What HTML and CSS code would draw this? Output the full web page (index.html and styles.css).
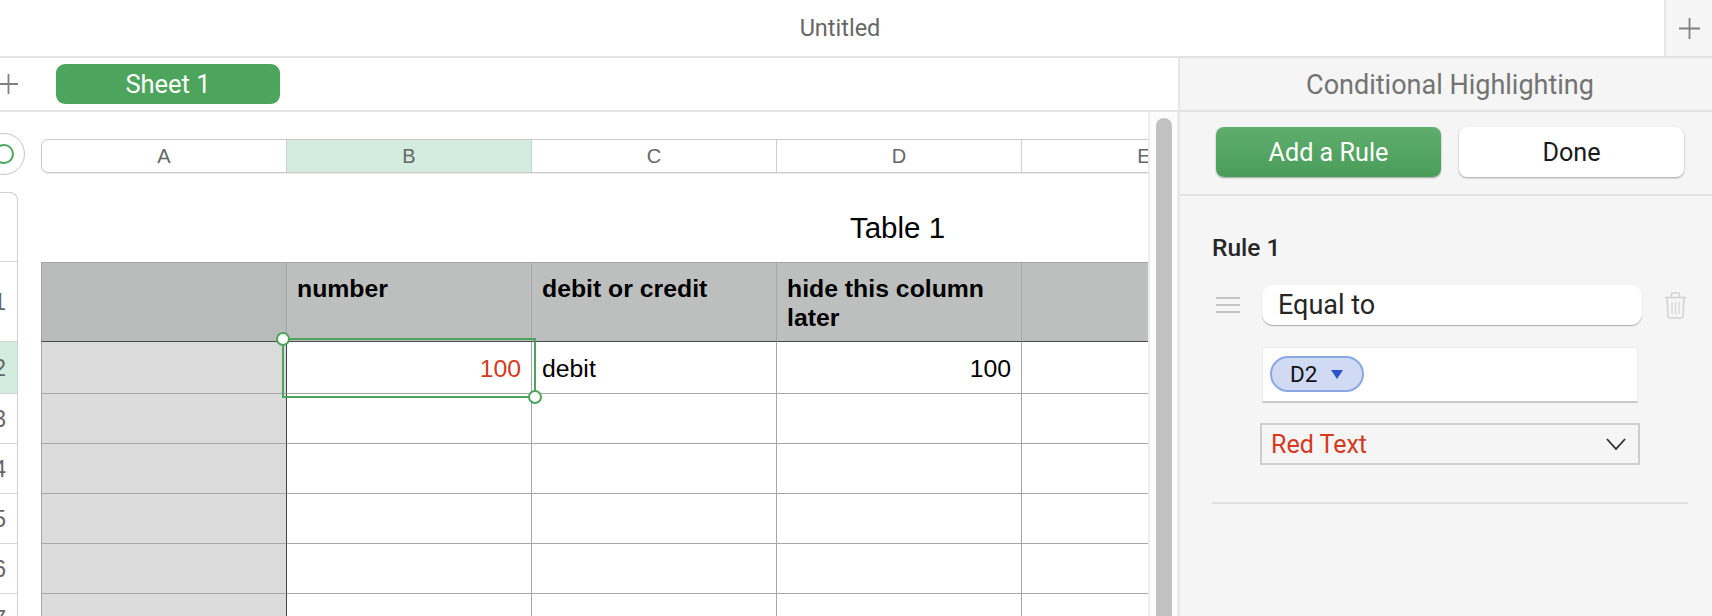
FILE: index.html
```html
<!DOCTYPE html>
<html>
<head>
  <meta charset="utf-8" />
  <title>Untitled</title>
  <link rel="stylesheet" href="styles.css">
</head>
<body>

<div class="titlebar">
  <div class="doc-title">Untitled</div>
  <div class="new-btn">
    <svg width="21" height="21" viewBox="0 0 21 21"><path d="M10.5 0V21M0 10.5H21" stroke="#808080" stroke-width="1.8" fill="none"/></svg>
  </div>
</div>

<div class="main">
  <div class="left">
    <div class="tabbar">
      <svg class="add-sheet" width="19" height="20" viewBox="0 0 19 20"><path d="M9.5 0V20M0 10H19" stroke="#808080" stroke-width="1.8" fill="none"/></svg>
      <div class="tab">Sheet 1</div>
    </div>

    <div class="pane">
      <div class="sheet">
        <div class="gutter">
          <div class="corner"><span class="corner-ring"></span></div>
          <div class="rows">
            <div class="row-h row-blank"></div>
            <div class="row-h row-first"><span>1</span></div>
            <div class="row-h row-on"><span>2</span></div>
            <div class="row-h"><span>3</span></div>
            <div class="row-h"><span>4</span></div>
            <div class="row-h"><span>5</span></div>
            <div class="row-h"><span>6</span></div>
            <div class="row-h"><span>7</span></div>
          </div>
        </div>

        <div class="grid">
          <div class="cols">
            <div class="col">A</div>
            <div class="col col-on">B</div>
            <div class="col">C</div>
            <div class="col">D</div>
            <div class="col">E</div>
          </div>
          <div class="table-name">Table 1</div>
          <div class="table-wrap">
            <table class="data">
              <tr class="head">
                <td></td>
                <td>number</td>
                <td>debit or credit</td>
                <td>hide this column later</td>
                <td></td><td></td><td></td>
              </tr>
              <tr class="first">
                <td></td>
                <td class="num red">100</td>
                <td>debit</td>
                <td class="num">100</td>
                <td></td><td></td><td></td>
              </tr>
              <tr><td></td><td></td><td></td><td></td><td></td><td></td><td></td></tr>
              <tr><td></td><td></td><td></td><td></td><td></td><td></td><td></td></tr>
              <tr><td></td><td></td><td></td><td></td><td></td><td></td><td></td></tr>
              <tr><td></td><td></td><td></td><td></td><td></td><td></td><td></td></tr>
              <tr><td></td><td></td><td></td><td></td><td></td><td></td><td></td></tr>
            </table>
            <div class="selection">
              <span class="knob knob-a"></span>
              <span class="knob knob-b"></span>
            </div>
          </div>
        </div>
      </div>

      <div class="scroll"><div class="thumb"></div></div>
    </div>
  </div>

  <div class="panel">
    <div class="panel-head">Conditional Highlighting</div>

    <div class="panel-btns">
      <div class="btn btn-add">Add a Rule</div>
      <div class="btn btn-done">Done</div>
    </div>

    <div class="rule">
      <div class="rule-name">Rule 1</div>

      <div class="rule-row">
        <div class="handle"><i></i><i></i><i></i></div>
        <div class="rule-type">Equal to</div>
        <svg class="trash" width="23" height="27" viewBox="0 0 23 27" fill="none" stroke="#d2d2d2" stroke-width="1.6">
          <path d="M1 5.5H22"/>
          <path d="M7.5 5V2.5Q7.5 1 9 1H14Q15.5 1 15.5 2.5V5"/>
          <path d="M3 6L4 24Q4.2 26 6 26H17Q18.8 26 19 24L20 6"/>
          <path d="M8 10V22M11.5 10V22M15 10V22" stroke-width="1.2"/>
        </svg>
      </div>

      <div class="rule-value">
        <div class="token">D2<span class="token-arrow"></span></div>
      </div>

      <div class="rule-style">
        <span>Red Text</span>
        <svg width="20" height="12" viewBox="0 0 20 12"><path d="M1 1L10 11L19 1" stroke="#2b2b2b" stroke-width="1.8" fill="none"/></svg>
      </div>

      <div class="rule-line"></div>
    </div>
  </div>
</div>

</body>
</html>
```

FILE: styles.css
```css
* {
  margin: 0;
  padding: 0;
  box-sizing: border-box;
}

html, body {
  width: 1712px;
  height: 616px;
  overflow: hidden;
  background: #fff;
}

body {
  font-family: Roboto, "Noto Sans", sans-serif;
}

.titlebar {
  display: flex;
  height: 58px;
  border-bottom: 2px solid #e3e3e3;
}

.doc-title {
  flex: 1;
  padding-left: 16px;
  text-align: center;
  line-height: 56px;
  font-size: 23.5px;
  color: #666;
}

.new-btn {
  display: flex;
  align-items: center;
  justify-content: center;
  width: 48px;
  background: #f5f5f5;
  border-left: 2px solid #e6e6e6;
}

.main {
  display: flex;
  height: 558px;
}

.left {
  width: 1178px;
  overflow: hidden;
}

.tabbar {
  display: flex;
  align-items: center;
  height: 54px;
  border-bottom: 2px solid #e3e3e3;
  padding-bottom: 1px;
}

.add-sheet {
  margin-left: -1px;
  margin-right: 38px;
}

.tab {
  width: 224px;
  height: 40px;
  line-height: 40px;
  border-radius: 9px;
  background: #4da45c;
  color: #fff;
  text-align: center;
  font-size: 25.5px;
}

.pane {
  display: flex;
  height: 504px;
}

.sheet {
  display: flex;
  width: 1148px;
  overflow: hidden;
}

.gutter {
  flex: none;
  width: 41px;
  padding-top: 21px;
}

.corner {
  display: flex;
  align-items: center;
  justify-content: center;
  width: 42px;
  height: 42px;
  margin-left: -17px;
  border: 1.5px solid #c6c6c6;
  border-radius: 50%;
  background: #fff;
}

.corner-ring {
  width: 20px;
  height: 20px;
  border: 2px solid #4da45c;
  border-radius: 50%;
}

.rows {
  width: 38px;
  margin-top: 17px;
  margin-left: -20px;
  border: 1.5px solid #d0d0d0;
  border-left: 0;
  border-bottom: 0;
  border-top-right-radius: 8px;
}

.row-h {
  display: flex;
  align-items: center;
  justify-content: flex-end;
  height: 50px;
  padding: 2px 11px 0 0;
  border-bottom: 1px solid #d6d6d6;
  font-family: "Liberation Sans", Arial, sans-serif;
  font-size: 23px;
  color: #666;
}

.row-blank {
  height: 69px;
}

.row-first {
  height: 80px;
}

.row-on {
  height: 52px;
  background: #d4ecdf;
}

.grid {
  flex: none;
  padding-top: 27px;
}

.cols {
  display: flex;
  width: 1228px;
  height: 34px;
  border: 1.5px solid #c8c8c8;
  border-radius: 7px 0 0 7px;
  box-shadow: 0 1px 1px #eee;
}

.col {
  width: 245px;
  padding-top: 1px;
  line-height: 31px;
  text-align: center;
  border-right: 1px solid #cfcfcf;
  font-family: "Liberation Sans", Arial, sans-serif;
  font-size: 20px;
  color: #666;
}

.col-on {
  background: #d4ecdf;
}

.table-name {
  width: 1713px;
  height: 89px;
  padding-top: 37px;
  text-align: center;
  font-family: "Liberation Sans", Arial, sans-serif;
  font-size: 29.5px;
  line-height: 36px;
  color: #000;
}

.table-wrap {
  position: relative;
  width: 1716px;
}

.data {
  width: 1716px;
  table-layout: fixed;
  border-collapse: separate;
  border-spacing: 0;
  font-family: "Liberation Sans", Arial, sans-serif;
  font-size: 24.8px;
  color: #000;
}

.data td {
  height: 50px;
  padding: 0 10px 0 10px;
  border-right: 1px solid #a6a6a6;
  border-bottom: 1px solid #a6a6a6;
  background: #fff;
  vertical-align: middle;
}

.data td:first-child {
  width: 246px;
  background: #dbdbdb;
  border-left: 1px solid #a6a6a6;
  border-right-color: #444;
}

.data .head td {
  height: 80px;
  padding-top: 11px;
  vertical-align: top;
  background: #bdbfbe;
  border-top: 1px solid #a6a6a6;
  border-bottom-color: #4a4a4a;
  font-weight: bold;
  line-height: 29px;
}

.data .head td:first-child {
  background: #b9bbba;
  border-right-color: #a6a6a6;
}

.data .first td {
  height: 52px;
  padding-top: 2px;
}

.num {
  text-align: right;
}

.red {
  color: #d33a1f;
}

.selection {
  position: absolute;
  left: 241px;
  top: 76px;
  width: 254px;
  height: 60px;
  border: 2px solid #4da45c;
}

.knob {
  position: absolute;
  width: 14px;
  height: 14px;
  border: 2px solid #4da45c;
  border-radius: 50%;
  background: #fff;
}

.knob-a {
  left: -8px;
  top: -8px;
}

.knob-b {
  right: -8px;
  bottom: -8px;
}

.scroll {
  width: 30px;
  padding-top: 6px;
  padding-left: 6px;
  border-left: 2px solid #ececec;
  border-right: 1px solid #ececec;
  background: #fcfcfc;
}

.thumb {
  width: 16px;
  height: 520px;
  background: #c2c2c2;
  border-radius: 8px 8px 0 0;
}

.panel {
  flex: none;
  width: 534px;
  border-left: 2px solid #e6e6e6;
  background: #f5f5f5;
}

.panel-head {
  height: 54px;
  padding-left: 8px;
  border-bottom: 2px solid #e3e3e3;
  text-align: center;
  line-height: 55px;
  font-size: 27px;
  color: #737373;
}

.panel-btns {
  display: flex;
  gap: 18px;
  height: 84px;
  padding: 15px 0 0 36px;
  border-bottom: 2px solid #e3e3e3;
}

.btn {
  width: 225px;
  height: 50px;
  line-height: 52px;
  border-radius: 8px;
  text-align: center;
  font-size: 25.2px;
  box-shadow: 0 1px 2px rgba(0, 0, 0, 0.35);
}

.btn-add {
  background: linear-gradient(#5fad6e, #4a9d59);
  color: #fff;
}

.btn-done {
  background: #fff;
  color: #1a1a1a;
}

.rule {
  padding: 40px 24px 0 32px;
}

.rule-name {
  line-height: 24px;
  font-size: 24.5px;
  font-weight: 500;
  color: #262626;
}

.rule-row {
  display: flex;
  align-items: center;
  margin-top: 25px;
}

.handle {
  display: flex;
  flex-direction: column;
  gap: 5px;
  width: 24px;
  margin-left: 4px;
}

.handle i {
  height: 2px;
  background: #c4c4c4;
}

.rule-type {
  width: 380px;
  height: 40px;
  margin-left: 22px;
  padding-left: 16px;
  line-height: 41px;
  border-radius: 11px;
  background: #fff;
  box-shadow: 0 1px 1px rgba(0, 0, 0, 0.3);
  font-size: 27px;
  color: #262626;
}

.trash {
  margin-left: 22px;
}

.rule-value {
  display: flex;
  align-items: flex-start;
  width: 376px;
  height: 56px;
  margin: 22px 0 0 50px;
  padding: 8px 0 0 7px;
  background: #fff;
  border: 1px solid #ebebeb;
  border-bottom: 2px solid #c8c8c8;
}

.token {
  display: flex;
  align-items: center;
  width: 94px;
  height: 36px;
  padding-left: 18px;
  border: 2px solid #8aa7e4;
  border-radius: 18px;
  background: #d0dbf3;
  font-size: 22.5px;
  color: #111;
}

.token-arrow {
  width: 0;
  height: 0;
  margin-left: 14px;
  border-left: 6.5px solid transparent;
  border-right: 6.5px solid transparent;
  border-top: 9px solid #2a55c8;
}

.rule-style {
  display: flex;
  align-items: center;
  justify-content: space-between;
  width: 380px;
  height: 42px;
  margin: 20px 0 0 48px;
  padding: 0 12px 0 9px;
  border: 2px solid #cdcdcd;
  font-size: 25px;
  color: #d33a1f;
}

.rule-line {
  height: 2px;
  margin-top: 37px;
  background: #e0e0e0;
}
```
